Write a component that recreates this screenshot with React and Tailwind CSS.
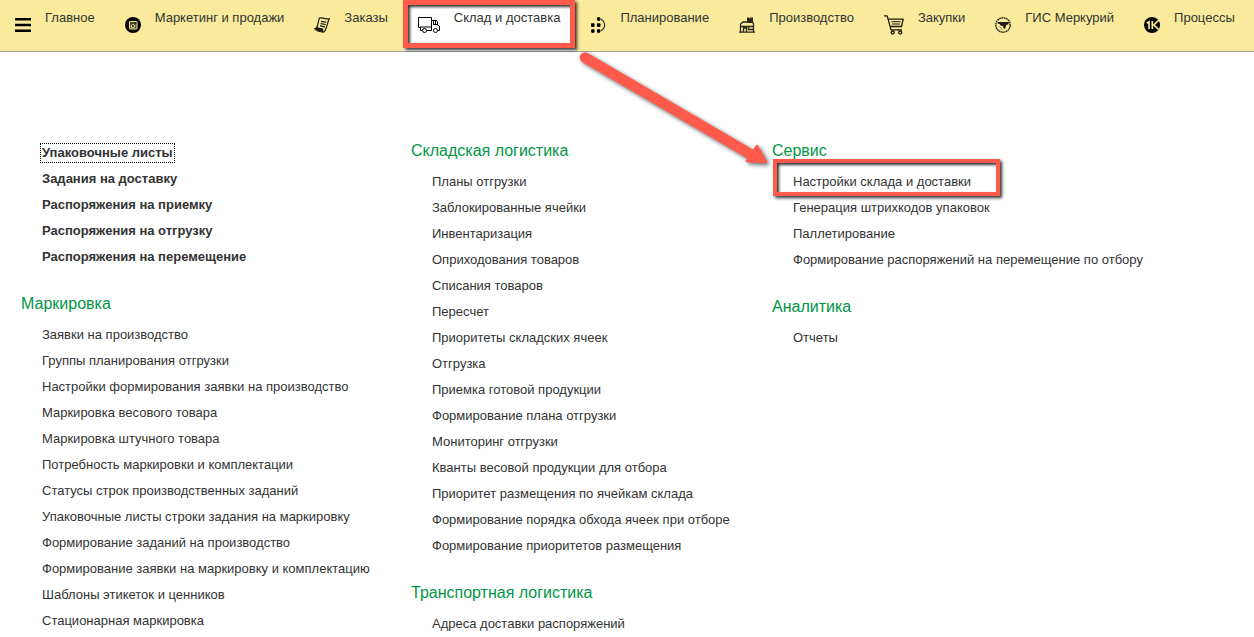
const svg = { 'aria-hidden': true, shapeRendering: 'geometricPrecision' };

function MenuIcon() {
  return (
    <svg {...svg} className="h-4 w-4" viewBox="0 0 16 16">
      <path d="M0 1h16v2.500H0zM0 6.800h16v2.400H0zM0 12.500h16V15H0z" fill="#000" />
    </svg>
  );
}

function MarketingIcon() {
  return (
    <svg {...svg} className="h-4 w-4" viewBox="0 0 16 16">
      <circle cx="8" cy="8" r="8" fill="#000" />
      <rect x="4.500" y="4.500" width="7.500" height="7.500" rx=".5" fill="#4a4530" stroke="#f9eb9b" />
      <path d="M6 10.500V8l2.500-1 2 2-1.500 2z" fill="#f9eb9b" />
      <circle cx="8" cy="9" r="1" fill="#000" />
      <path d="M9.500 5.500h1.800v1.800z" fill="#000" />
    </svg>
  );
}

function OrdersIcon() {
  return (
    <svg {...svg} className="h-4 w-4" viewBox="0 0 16 16" fill="none" stroke="#1c1a10">
      <path d="M5.500 1C8 .2 12 2.200 15.300 1.800C13.400 5 13.200 10.500 10.700 14.200C9 16.400 7.500 13.800 8.600 12.200L2.600 10.800C4.500 7.500 4 4 5.500 1Z" strokeWidth="1.200" />
      <path d="M2.600 10.800.6 11.600C1 13.500 5.500 14.800 9 15L8.500 12.200Z" fill="#1c1a10" />
      <path d="M7 4.300l5.200.9M6.500 6.600l5.200.9M6 8.900l5.100.9" strokeWidth="1.200" />
    </svg>
  );
}

function TruckIcon() {
  return (
    <svg {...svg} className="h-4 w-[22px]" viewBox="0 0 22 16" fill="none" stroke="#000">
      <path d="M4.500 13.500h-2v-3h-2V.5h13v9.500H2M13.500 10v3.500h-5M13.500 3.500h5l1 1.500v3l2 1v4.500h-2M15.500 4v3.500h4M17.500 4v4" />
      <circle cx="6.500" cy="13.500" r="2" fill="#fff" />
      <circle cx="17.500" cy="13.500" r="2" fill="#fff" />
    </svg>
  );
}

function PlanningIcon() {
  return (
    <svg {...svg} className="h-4 w-4" viewBox="0 0 16 16">
      <g fill="#000">
        <circle cx="8.700" cy="2" r="1.900" />
        <rect x="1" y="6.300" width="3.600" height="3.600" rx=".8" />
        <rect x="6.900" y="6.300" width="3.600" height="3.600" rx=".8" />
        <circle cx="2.800" cy="14" r="1.900" />
        <circle cx="8.700" cy="14" r="1.900" />
      </g>
      <path d="M11 2.200C15.800 5 15.800 11 11 13.800" fill="none" stroke="#29261a" strokeWidth="1.100" />
    </svg>
  );
}

function FactoryIcon() {
  return (
    <svg {...svg} className="h-4 w-4" viewBox="0 0 16 16">
      <path d="M8 .5h2v.8h1V.5h3V6H8z" fill="#29261a" />
      <path d="M1.500 15V7L4 5h9.500l1 2v8M0 15.200h16M2 9.500h12M4.500 15v-4h3v4M9.500 10v2.500H14" fill="none" stroke="#29261a" strokeWidth="1.300" />
    </svg>
  );
}

function CartIcon() {
  return (
    <svg {...svg} className="h-5 w-5" viewBox="0 0 20 20" fill="none" stroke="#1c1a10" strokeWidth="1.300" strokeLinejoin="round">
      <path d="M0 .8h3.200L7 14.800h11M4.300 4.200h14.900l-1.700 7.300H6.300" />
      <path d="M7.500 6.700h9M8 9h8" strokeWidth="1" />
      <circle cx="8.700" cy="17.500" r="1.500" />
      <circle cx="16.200" cy="17.500" r="1.500" />
    </svg>
  );
}

function MercuryIcon() {
  return (
    <svg {...svg} className="h-4 w-4" viewBox="0 0 16 16">
      <circle cx="8" cy="8" r="7.200" fill="none" stroke="#29261a" strokeWidth="1.400" strokeDasharray="1.800 .5" />
      <path d="M2.500 5h11.300l-.3 2.200-2.300.8-.6 2.800L9 12 7.800 10l1-.8L6 8.700 4.500 7 2.800 6.500z" fill="#1c1a10" />
      <path d="M4.500 9.500 7 12.500" stroke="#6b6543" strokeWidth=".8" />
    </svg>
  );
}

function ProcessIcon() {
  return (
    <svg {...svg} className="h-4 w-4" viewBox="0 0 16 16">
      <circle cx="8" cy="8" r="8" fill="#000" />
      <path d="M2.800 6.200 5 4.800V12M8.300 4v8M14.800 3.200 9.800 8l4.800 4.500" fill="none" stroke="#f9eb9b" strokeWidth="1.700" />
    </svg>
  );
}

const sections = [
  { label: 'Главное', Icon: MenuIcon },
  { label: 'Маркетинг и продажи', Icon: MarketingIcon },
  { label: 'Заказы', Icon: OrdersIcon },
  { label: 'Склад и доставка', Icon: TruckIcon, active: true },
  { label: 'Планирование', Icon: PlanningIcon },
  { label: 'Производство', Icon: FactoryIcon },
  { label: 'Закупки', Icon: CartIcon },
  { label: 'ГИС Меркурий', Icon: MercuryIcon },
  { label: 'Процессы', Icon: ProcessIcon },
];

const columns = [
  [
    {
      important: true,
      items: [
        'Упаковочные листы',
        'Задания на доставку',
        'Распоряжения на приемку',
        'Распоряжения на отгрузку',
        'Распоряжения на перемещение',
      ],
    },
    {
      title: 'Маркировка',
      items: [
        'Заявки на производство',
        'Группы планирования отгрузки',
        'Настройки формирования заявки на производство',
        'Маркировка весового товара',
        'Маркировка штучного товара',
        'Потребность маркировки и комплектации',
        'Статусы строк производственных заданий',
        'Упаковочные листы строки задания на маркировку',
        'Формирование заданий на производство',
        'Формирование заявки на маркировку и комплектацию',
        'Шаблоны этикеток и ценников',
        'Стационарная маркировка',
      ],
    },
  ],
  [
    {
      title: 'Складская логистика',
      items: [
        'Планы отгрузки',
        'Заблокированные ячейки',
        'Инвентаризация',
        'Оприходования товаров',
        'Списания товаров',
        'Пересчет',
        'Приоритеты складских ячеек',
        'Отгрузка',
        'Приемка готовой продукции',
        'Формирование плана отгрузки',
        'Мониторинг отгрузки',
        'Кванты весовой продукции для отбора',
        'Приоритет размещения по ячейкам склада',
        'Формирование порядка обхода ячеек при отборе',
        'Формирование приоритетов размещения',
      ],
    },
    { title: 'Транспортная логистика', items: ['Адреса доставки распоряжений'] },
  ],
  [
    {
      title: 'Сервис',
      items: [
        'Настройки склада и доставки',
        'Генерация штрихкодов упаковок',
        'Паллетирование',
        'Формирование распоряжений на перемещение по отбору',
      ],
    },
    { title: 'Аналитика', items: ['Отчеты'] },
  ],
];

const frame =
  'pointer-events-none absolute z-10 border-[#ff5a4b] shadow-[2px_2px_3px_rgba(0,0,0,0.8),inset_2px_2px_3px_rgba(0,0,0,0.8)]';

function Group({ title, important, items }) {
  return (
    <section>
      {title && <h2 className="flex h-9 items-center text-base text-[#009646]">{title}</h2>}
      <ul className={important ? 'pt-[7px] font-bold' : ''}>
        {items.map((item) => (
          <li key={item} className="flex h-[26px] items-center pl-[19px]">
            <a
              href="#"
              className={
                item === 'Упаковочные листы'
                  ? 'relative border border-dotted border-black px-px leading-[18px] whitespace-nowrap'
                  : 'relative border border-transparent px-px leading-[18px] whitespace-nowrap'
              }
            >
              {item}
              {item === 'Настройки склада и доставки' && (
                <span className={`${frame} -top-[14px] -right-[28px] -bottom-[5px] -left-[19px] border-4`} />
              )}
            </a>
          </li>
        ))}
      </ul>
    </section>
  );
}

export default function App() {
  return (
    <div className="relative min-h-screen overflow-hidden bg-white font-['Liberation_Sans',Arial,sans-serif] text-[13px] text-[#333]">
      <nav className="flex h-[52px] border-b border-[#a0a0a0] bg-[#f9eb9b]">
        {sections.map(({ label, Icon, active }) => (
          <a
            key={label}
            href="#"
            className={
              active
                ? 'relative flex shrink-0 gap-[14px] bg-white px-[15px]'
                : 'relative flex shrink-0 gap-[14px] px-[15px]'
            }
          >
            <span className="flex h-[50px] items-center">
              <Icon />
            </span>
            <span className="pt-2 leading-5 whitespace-nowrap">{label}</span>
            {active && <span className={`${frame} inset-x-0 top-0 bottom-[3px] border-[5px]`} />}
          </a>
        ))}
      </nav>
      <main className="grid grid-cols-[390fr_361fr_482fr] pt-[81px] pl-[21px]">
        {columns.map((groups, index) => (
          <div key={index} className="flex flex-col gap-4">
            {groups.map((group) => (
              <Group key={group.title || 'important'} {...group} />
            ))}
          </div>
        ))}
      </main>
      <svg
        aria-hidden="true"
        className="pointer-events-none absolute top-[46px] left-[574px] h-[128px] w-[204px] drop-shadow-[2px_2px_2px_rgba(0,0,0,0.6)]"
        viewBox="574 46 204 128"
      >
        <path d="M585 57.500 752 155" stroke="#ff5a4b" strokeWidth="10.500" strokeLinecap="round" />
        <path d="M757 146 766 162 747 161Z" fill="#ff5a4b" stroke="#ff5a4b" strokeWidth="2.500" strokeLinejoin="round" />
      </svg>
    </div>
  );
}
